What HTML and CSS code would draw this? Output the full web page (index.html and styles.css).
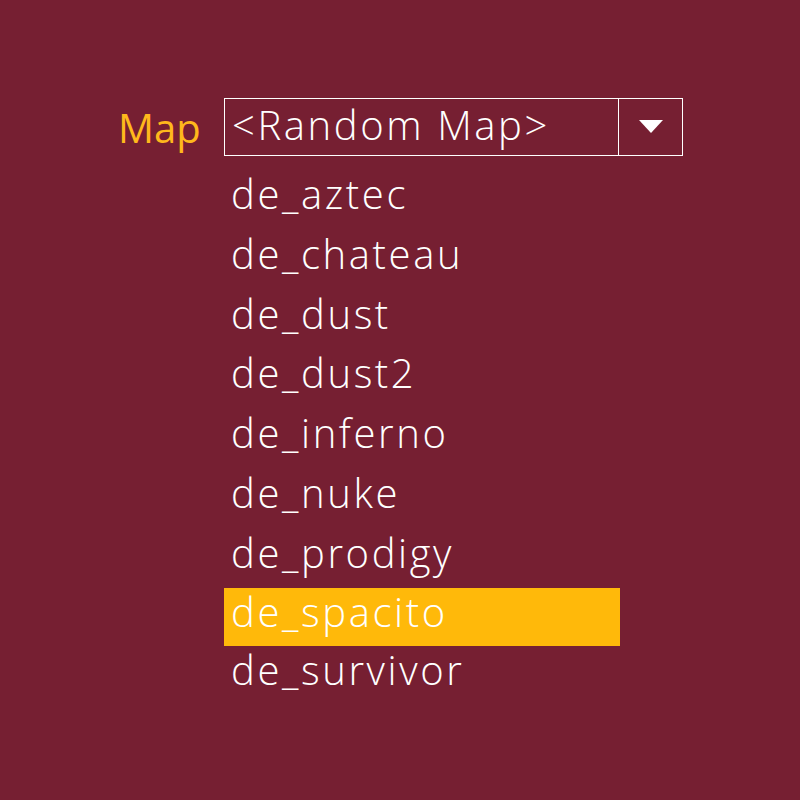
FILE: index.html
```html
<!DOCTYPE html>
<html>
<head>
<meta charset="utf-8">
<link rel="stylesheet" href="styles.css">
</head>
<body>
<div class="page">
  <div class="row">
    <div class="label">Map</div>
    <div class="select">
      <div class="value">&lt;Random Map&gt;</div>
      <div class="button"><svg width="24" height="14" viewBox="0 0 24 14"><polygon points="0,0 24,0 12,13" fill="#fff"/></svg></div>
    </div>
  </div>
  <ul class="list">
    <li>de_aztec</li>
    <li>de_chateau</li>
    <li>de_dust</li>
    <li>de_dust2</li>
    <li>de_inferno</li>
    <li>de_nuke</li>
    <li>de_prodigy</li>
    <li class="active">de_spacito</li>
    <li>de_survivor</li>
  </ul>
</div>
</body>
</html>
```
FILE: styles.css
```css
html, body {
  margin: 0;
  padding: 0;
  background: #761f32;
  height: 100%;
}
.page {
  padding-top: 98px;
  padding-left: 118px;
  font-family: "Open Sans", sans-serif;
  color: #fff;
}
.row {
  display: flex;
  align-items: center;
}
.label {
  color: #ffb81c;
  font-size: 40px;
  font-weight: 400;
  width: 106px;
}
.select {
  display: flex;
  width: 459px;
  height: 58px;
  box-sizing: border-box;
  border: 1px solid #fff;
}
.value {
  flex: 1;
  font-size: 40px;
  font-weight: 300;
  letter-spacing: 2.6px;
  line-height: 52px;
  padding-left: 7px;
  border-right: 1px solid #fff;
}
.button {
  width: 63px;
  display: flex;
  align-items: center;
  justify-content: center;
}
.list {
  list-style: none;
  margin: 14px 0 0 106px;
  padding: 0;
  width: 396px;
}
.list li {
  height: 59.75px;
  line-height: 48px;
  font-size: 40px;
  font-weight: 300;
  letter-spacing: 2.6px;
  padding-left: 7px;
}
.list li.active {
  background: #ffb90a;
  height: 58px;
}
```
